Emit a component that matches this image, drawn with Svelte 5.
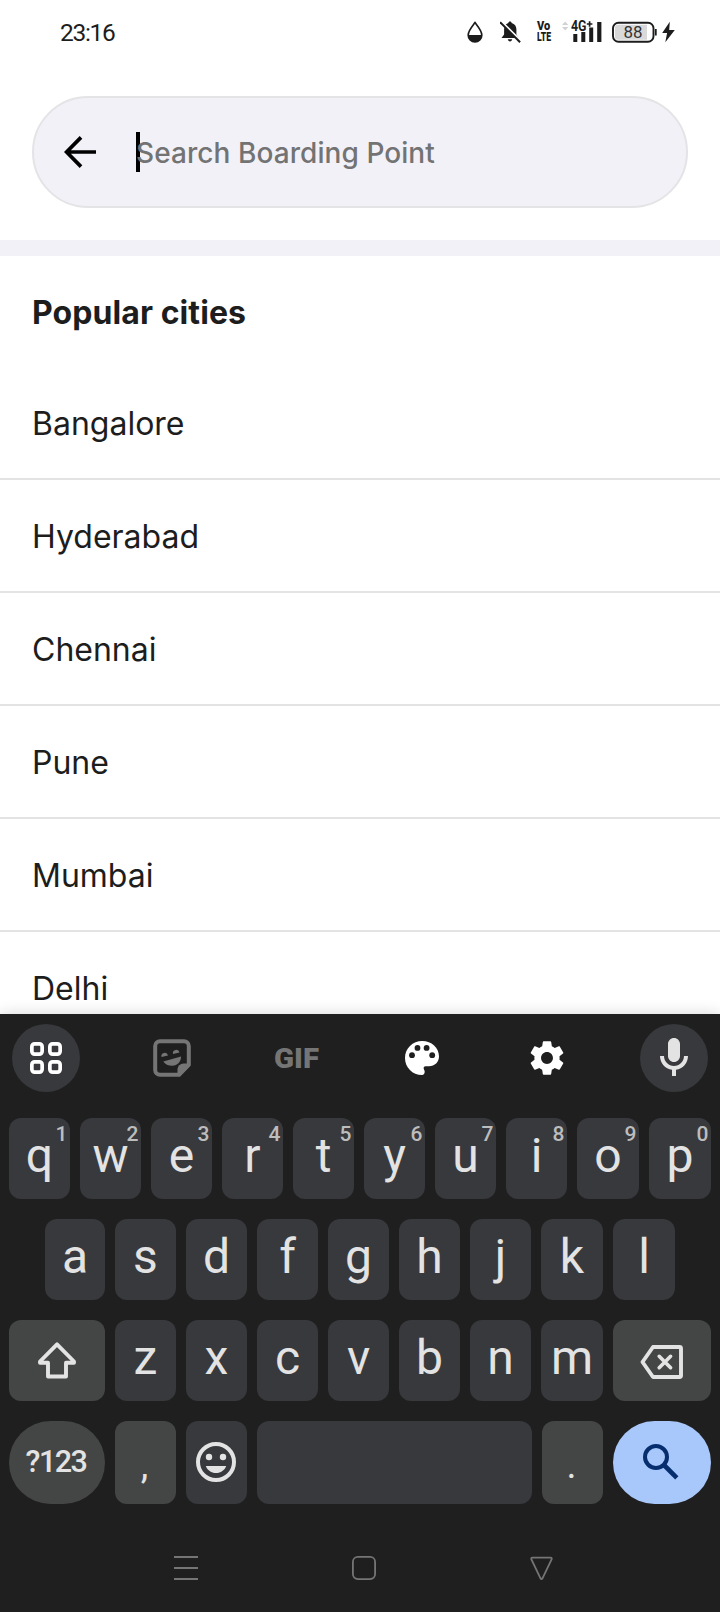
<script>
  const cities = ['Bangalore', 'Hyderabad', 'Chennai', 'Pune', 'Mumbai', 'Delhi'];
  const topRow = [...'qwertyuiop'].map((letter, i) => ({ letter, hint: (i + 1) % 10 }));
  const homeRow = [...'asdfghjkl'];
  const bottomRow = [...'zxcvbnm'];
</script>

<div class="screen">
  <header class="status">
    <span class="time">23:16</span>
    <div class="indicators">
      <svg class="drop" width="16" height="22" viewBox="0 0 16 22">
        <path d="M8 1.6C5.5 5 1.2 9.600 1.200 14a6.800 6.800 0 0 0 13.600 0C14.800 9.600 10.500 5 8 1.600Z" fill="none" stroke="#1c1c1c" stroke-width="1.700" />
        <path d="M1.200 14h13.600a6.800 6.800 0 0 1-13.600 0Z" fill="#1c1c1c" />
      </svg>
      <svg class="bell" width="21" height="22" viewBox="0 0 21 22">
        <path d="M10 .4c.9 0 1.600.6 1.700 1.500 3 .8 4.700 3.300 4.700 6.300v5.300l2.300 3.500H1.500l2.600-3.500V8.200c0-3 1.400-5.500 4.200-6.300C8.400 1 9.100.4 10 .4ZM7.800 18.300h4.400c-.3 1.500-1 2.100-2.200 2.100s-1.900-.6-2.200-2.100Z" fill="#1c1c1c" />
        <path d="M1.400.4 21 20" stroke="#fff" stroke-width="2" />
        <path d="M.1 1.200 20.100 21.300" stroke="#1c1c1c" stroke-width="2" />
      </svg>
      <div class="volte"><span class="vo">Vo</span><span class="lte">LTE</span></div>
      <svg class="signal" width="40" height="22" viewBox="0 0 40 22">
        <path d="M0 4 3.200.4 6.400 4ZM0 6 3.200 9.600 6.400 6Z" fill="#d2d2d2" />
        <path d="M11.300 13h4v8h-4zM19.300 11h4v10h-4zM27.200 6.500h4v14.500h-4zM35.200 1h4.200v20h-4.200z" fill="#1c1c1c" />
        <text x="9" y="10.400" textLength="15.500" lengthAdjust="spacingAndGlyphs" class="cell">4G</text>
        <path d="M24.800 3h5.600M27.600.2v5.600" stroke="#1c1c1c" stroke-width="1.700" />
      </svg>
      <svg class="battery" width="45" height="22" viewBox="0 0 45 22">
        <rect x="1" y="1.700" width="40.500" height="19" rx="5.500" fill="#fff" stroke="#1c1c1c" stroke-width="1.900" />
        <path d="M6 3.700h29v15H6a3 3 0 0 1-3-3v-9a3 3 0 0 1 3-3Z" fill="#d9d9d9" />
        <path d="M43.800 8v6.500" stroke="#1c1c1c" stroke-width="1.800" />
        <text x="11.500" y="17" textLength="19" lengthAdjust="spacingAndGlyphs">88</text>
      </svg>
      <svg class="bolt" width="13" height="22" viewBox="0 0 13 22">
        <path d="M7.800 .8 .2 12h4.900L3.300 21.200 12.800 9H7.200Z" fill="#1c1c1c" />
      </svg>
    </div>
  </header>

  <div class="search-wrap">
    <div class="search">
      <svg width="32" height="32" viewBox="0 0 32 32" fill="none" stroke="#000" stroke-width="3.700">
        <path d="M17 1.400 2.600 16 17 30.600M2.600 16H32" />
      </svg>
      <div class="field"><span class="caret"></span><span class="placeholder">Search Boarding Point</span></div>
    </div>
  </div>

  <main>
    <h1>Popular cities</h1>
    <ul>
      {#each cities as city}
        <li>{city}</li>
      {/each}
    </ul>
  </main>

  <section class="keyboard">
    <div class="toolbar">
      <div class="tool round">
        <svg width="32" height="32" viewBox="0 0 32 32" fill="none" stroke="#fff" stroke-width="3.700">
          <rect x="1.850" y="1.850" width="10.300" height="10.300" rx="2.800" />
          <rect x="19.850" y="1.850" width="10.300" height="10.300" rx="2.800" />
          <rect x="1.850" y="19.850" width="10.300" height="10.300" rx="2.800" />
          <rect x="19.850" y="19.850" width="10.300" height="10.300" rx="2.800" />
        </svg>
      </div>
      <div class="tool">
        <svg width="38" height="38" viewBox="0 0 38 38">
          <path d="M7 2.200h24a4.800 4.800 0 0 1 4.800 4.800v18.600L26.200 35.800H7A4.800 4.800 0 0 1 2.200 31V7A4.800 4.800 0 0 1 7 2.200Z" fill="none" stroke="#757575" stroke-width="4" />
          <path d="M37 24.500H30.500a6 6 0 0 0-6 6V37h2.500L37 27Z" fill="#757575" />
          <path d="M8.500 18a3.300 3.300 0 0 1 6.500-1.600ZM20 14.900a3.300 3.300 0 0 1 6.500-1.400ZM10.300 22.400 28 17.500c.3 5-3.500 9.200-8.700 9.200-4 0-7.300-1.700-9-4.300Z" fill="#757575" />
        </svg>
      </div>
      <div class="tool">
        <svg class="gif" width="46" height="34" viewBox="0 0 46 34">
          <text x="0" y="27" textLength="45" lengthAdjust="spacingAndGlyphs">GIF</text>
        </svg>
      </div>
      <div class="tool palette">
        <svg width="34" height="34" viewBox="0 0 34 34">
          <path d="M17 34C7.500 34 0 26.500 0 17S7.600 0 17.300 0C26.600 0 34 6.700 34 15.300c0 6-4.200 9.900-10 9.900h-3.200c-1.900 0-2.500 1.200-2 2.700.4 1 .9 1.700.9 2.900 0 1.900-1 3.200-2.700 3.200Z" fill="#fff" />
          <circle cx="7" cy="14.200" r="2.900" fill="#1f1f1f" />
          <circle cx="12.500" cy="6.900" r="2.900" fill="#1f1f1f" />
          <circle cx="21.600" cy="6.900" r="2.900" fill="#1f1f1f" />
          <circle cx="27.200" cy="14.200" r="2.900" fill="#1f1f1f" />
        </svg>
      </div>
      <div class="tool gear">
        <svg width="42" height="42" viewBox="0 0 24 24">
          <path fill="#fff" d="M19.140 12.940c.04-.3.060-.61.060-.94 0-.32-.02-.64-.07-.94l2.030-1.580c.18-.14.230-.41.120-.61l-1.920-3.320c-.12-.22-.37-.29-.59-.22l-2.390.96c-.5-.38-1.030-.7-1.620-.94l-.36-2.540c-.04-.24-.24-.41-.48-.41h-3.840c-.24 0-.43.170-.47.410l-.36 2.540c-.59.240-1.130.570-1.620.94l-2.390-.96c-.22-.08-.47 0-.59.220L2.740 8.870c-.12.210-.08.470.12.610l2.030 1.580c-.05.300-.09.630-.09.940s.02.640.07.940l-2.030 1.580c-.18.140-.23.410-.12.610l1.920 3.320c.12.220.37.290.59.220l2.390-.96c.5.380 1.030.700 1.620.94l.36 2.540c.05.240.24.410.48.410h3.840c.24 0 .44-.17.470-.41l.36-2.540c.59-.24 1.130-.56 1.620-.94l2.390.96c.22.080.47 0 .59-.22l1.920-3.320c.12-.22.070-.47-.12-.61l-2.010-1.580zM12 15.400c-1.880 0-3.400-1.520-3.400-3.400s1.520-3.400 3.400-3.400 3.400 1.520 3.400 3.400-1.520 3.400-3.400 3.400z" />
        </svg>
      </div>
      <div class="tool round">
        <svg width="48" height="48" viewBox="0 0 24 24">
          <path fill="#e3e3e3" d="M12 14c1.660 0 3-1.340 3-3V5c0-1.660-1.340-3-3-3S9 3.340 9 5v6c0 1.660 1.340 3 3 3zm5-3c0 2.760-2.240 5-5 5s-5-2.240-5-5H5c0 3.530 2.610 6.430 6 6.920V21h2v-3.080c3.390-.49 6-3.390 6-6.920h-2z" />
        </svg>
      </div>
    </div>

    <div class="row top">
      {#each topRow as key}
        <div class="key">{key.letter}<sup>{key.hint}</sup></div>
      {/each}
    </div>
    <div class="row home">
      {#each homeRow as letter}
        <div class="key">{letter}</div>
      {/each}
    </div>
    <div class="row lower">
      <div class="key special shift">
        <svg width="40" height="40" viewBox="0 0 40 40" fill="none" stroke="#e3e3e3" stroke-width="3.900" stroke-linejoin="round">
          <path d="M20 3.300 3 20.500V21.700H11V35.500H29V21.700H37V20.500Z" />
        </svg>
      </div>
      {#each bottomRow as letter}
        <div class="key">{letter}</div>
      {/each}
      <div class="key special erase">
        <svg width="44" height="36" viewBox="0 0 44 36" fill="none" stroke="#e3e3e3" stroke-width="3.900" stroke-linejoin="round">
          <path d="M13 3H39.500Q41 3 41 4.500V31.500Q41 33 39.500 33H13L2.500 18Z" />
          <path d="M19.200 12.300 30.600 23.700M30.600 12.300 19.200 23.700" stroke-linecap="round" stroke-width="3.600" />
        </svg>
      </div>
    </div>
    <div class="row last">
      <div class="key special symbols">?123</div>
      <div class="key special punct">,</div>
      <div class="key emoji">
        <svg width="40" height="40" viewBox="0 0 40 40">
          <circle cx="20" cy="20" r="18" fill="none" stroke="#e3e3e3" stroke-width="4" />
          <circle cx="13" cy="15" r="3.200" fill="#e3e3e3" />
          <circle cx="27" cy="15" r="3.200" fill="#e3e3e3" />
          <path d="M9.800 24h20.400c-1.500 4.300-5.500 7-10.200 7s-8.700-2.700-10.200-7Z" fill="#e3e3e3" />
        </svg>
      </div>
      <div class="key"></div>
      <div class="key special punct">.</div>
      <div class="key go">
        <svg width="36" height="36" viewBox="0 0 36 36" fill="none" stroke="#062e6f" stroke-width="4">
          <circle cx="13" cy="13" r="11" />
          <path d="M20.500 20.500 33.800 33.800" stroke-width="4.600" />
        </svg>
      </div>
    </div>

    <nav>
      <svg width="24" height="24" viewBox="0 0 24 24"><path d="M0 1h24M0 12h24M0 23h24" stroke="#757575" stroke-width="2" /></svg>
      <svg width="24" height="24" viewBox="0 0 24 24"><rect x=".9" y=".9" width="22.200" height="22.200" rx="5" fill="none" stroke="#757575" stroke-width="1.800" /></svg>
      <svg width="24" height="24" viewBox="0 0 24 24"><path d="M2.400 1.600h18.200q1.600.2 1 1.900L12.500 22.400q-1 1.300-2 0L1.400 3.500q-.6-1.700 1-1.900Z" fill="none" stroke="#757575" stroke-width="1.800" /></svg>
    </nav>
  </section>
</div>

<style>
  :global(body) { margin: 0; background: #fff; }
  .screen {
    width: 720px;
    height: 1612px;
    display: flex;
    flex-direction: column;
    overflow: hidden;
    background: #fff;
    color: #1d1d1d;
    font-family: Inter, sans-serif;
  }
  svg { display: block; flex: none; }

  .status {
    flex: none;
    height: 64px;
    padding: 0 45px 0 60px;
    display: flex;
    justify-content: space-between;
    align-items: center;
    box-sizing: border-box;
    font-family: Roboto, sans-serif;
  }
  .time { font-size: 24.500px; letter-spacing: -1.300px; line-height: 28px; padding-top: 2px; }
  .indicators { display: flex; align-items: center; }
  .drop { margin-right: 17px; }
  .bell { margin-right: 16px; }
  .volte {
    width: 16px;
    height: 22px;
    margin-right: 9px;
    display: flex;
    flex-direction: column;
    align-items: flex-start;
    font-weight: 900;
    font-size: 12px;
    line-height: 11px;
    color: #1c1c1c;
    white-space: nowrap;
  }
  .vo { transform: scaleX(0.920); transform-origin: left; }
  .lte { transform: scaleX(0.720); transform-origin: left; }
  .signal { margin-right: 10px; overflow: visible; }
  .battery { margin-right: 5px; }
  .indicators text { font-family: Roboto, sans-serif; fill: #1c1c1c; }
  .indicators .cell { font-size: 14px; font-weight: 700; }
  .battery text { font-weight: 400; font-size: 16px; fill: #333; }

  .search-wrap {
    flex: none;
    padding: 32px;
    border-bottom: 16px solid #f2f1f8;
  }
  .search {
    height: 112px;
    box-sizing: border-box;
    border: 2px solid #e4e4e6;
    border-radius: 56px;
    background: #f2f1f8;
    display: flex;
    align-items: center;
    gap: 40px;
    padding-left: 30px;
  }
  .field { position: relative; height: 40px; line-height: 43px; }
  .caret { position: absolute; left: 0; top: 0; width: 4px; height: 40px; background: #000; }
  .placeholder { position: relative; font-size: 28px; font-weight: 450; letter-spacing: 0.070px; color: #737373; white-space: nowrap; }

  main { flex: none; height: 758px; overflow: hidden; }
  h1 { margin: 0; height: 111px; line-height: 114px; padding-left: 32px; font-size: 32px; font-weight: 700; letter-spacing: 0.080px; }
  ul { list-style: none; margin: 0; padding: 0; }
  li {
    box-sizing: border-box;
    height: 113px;
    line-height: 114px;
    padding-left: 32px;
    border-bottom: 2px solid #e3e3e3;
    font-size: 32px;
  }

  .keyboard {
    flex: 1;
    background: #1f1f1f;
    box-shadow: 0 0 14px rgba(0, 0, 0, 0.160);
    position: relative;
    padding: 10px 9px 0;
    color: #e3e3e3;
    font-family: Roboto, sans-serif;
  }
  .toolbar { display: flex; justify-content: space-between; margin: 0 3px 26px; }
  .tool { box-sizing: border-box; width: 68px; height: 68px; display: flex; align-items: center; justify-content: center; }
  .round { border-radius: 50%; background: #38393d; }
  .palette { padding-right: 2px; }
  .gear { padding-right: 3px; }
  .gif text { font: 900 27px Roboto, sans-serif; fill: #757575; }

  .row { display: grid; gap: 10px; height: 81px; margin-bottom: 20px; }
  .top { grid-template-columns: repeat(8, 61px) repeat(2, 62px); }
  .home { grid-template-columns: 60px repeat(6, 61px) repeat(2, 62px); padding-left: 36px; }
  .lower { grid-template-columns: 96px repeat(6, 61px) 62px 98px; }
  .last { grid-template-columns: 96px 61px 61px 275px 61px 98px; height: 83px; margin-bottom: 0; }
  .key {
    box-sizing: border-box;
    position: relative;
    display: flex;
    align-items: center;
    justify-content: center;
    border-radius: 12px;
    background: #38393d;
    font-size: 48px;
    line-height: 56px;
    padding-bottom: 6px;
  }
  .key sup {
    position: absolute;
    right: 3px;
    top: 4px;
    font-size: 21px;
    font-weight: 500;
    line-height: 25px;
    letter-spacing: -0.500px;
    color: #bdbdbd;
  }
  .special { background: #444645; }
  .shift { padding: 0; }
  .erase { padding: 3px 0 0; }
  .symbols { border-radius: 42px; padding: 0 2px 2px 0; font-size: 30.500px; font-weight: 500; letter-spacing: -1.500px; }
  .punct { font-size: 38px; padding: 4px 2px 0 0; }
  .emoji { padding: 0 1px 1px 0; }
  .go { border-radius: 42px; background: #a8c7fa; padding: 0 2px 2px 0; }

  nav { display: flex; justify-content: center; gap: 154px; padding: 52px 0 0 8px; }
</style>
